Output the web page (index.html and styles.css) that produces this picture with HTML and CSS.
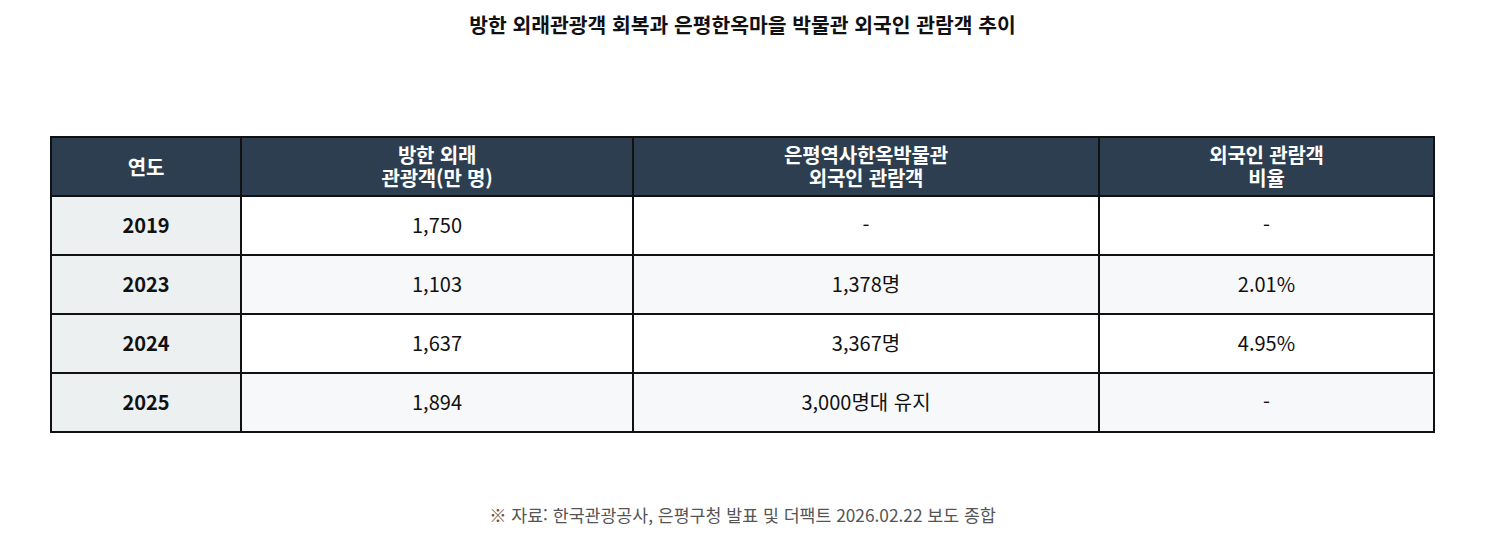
FILE: index.html
```html
<!DOCTYPE html>
<html lang="ko">
<head>
<meta charset="utf-8">
<link rel="stylesheet" href="styles.css">
</head>
<body>
<div class="page">
  <h1 class="title">방한 외래관광객 회복과 은평한옥마을 박물관 외국인 관람객 추이</h1>
  <table class="data">
    <colgroup>
      <col class="c1"><col class="c2"><col class="c3"><col class="c4">
    </colgroup>
    <thead>
      <tr>
        <th>연도</th>
        <th>방한 외래<br>관광객(만 명)</th>
        <th>은평역사한옥박물관<br>외국인 관람객</th>
        <th>외국인 관람객<br>비율</th>
      </tr>
    </thead>
    <tbody>
      <tr><td class="year">2019</td><td>1,750</td><td>-</td><td>-</td></tr>
      <tr class="alt"><td class="year">2023</td><td>1,103</td><td>1,378명</td><td>2.01%</td></tr>
      <tr><td class="year">2024</td><td>1,637</td><td>3,367명</td><td>4.95%</td></tr>
      <tr class="alt"><td class="year">2025</td><td>1,894</td><td>3,000명대 유지</td><td>-</td></tr>
    </tbody>
  </table>
  <p class="source">※ 자료: 한국관광공사, 은평구청 발표 및 더팩트 2026.02.22 보도 종합</p>
</div>
</body>
</html>
```

FILE: styles.css
```css
html, body {
  margin: 0;
  padding: 0;
  background: #ffffff;
}
.page {
  padding: 10px 50px 0 50px;
  font-family: "Noto Sans CJK KR", "Noto Sans", sans-serif;
  color: #111;
}
.title {
  margin: 0;
  text-align: center;
  font-size: 20.4px;
  font-weight: 700;
  line-height: 28px;
  color: #111;
}
.data {
  width: 100%;
  margin-top: 98px;
  border-collapse: collapse;
  border: 2px solid #111;
  table-layout: fixed;
}
.c1 { width: 190px; }
.c2 { width: 392px; }
.c3 { width: 466px; }
.c4 { width: auto; }
.data th, .data td {
  border: 2px solid #111;
  text-align: center;
  vertical-align: middle;
  padding: 0;
}
.data th {
  background: #2c3e50;
  color: #ffffff;
  font-size: 20px;
  font-weight: 700;
  line-height: 23px;
  height: 56px;
  padding-bottom: 1px;
  letter-spacing: -0.2px;
}
.data td {
  font-size: 20px;
  font-weight: 400;
  height: 54px;
  padding-bottom: 3px;
  color: #111;
  background: #ffffff;
}
.data tr.alt td {
  background: #f7f8fa;
}
.data td.year, .data tr.alt td.year {
  background: #ecf0f1;
  font-weight: 700;
}
.source {
  margin: 70px 0 0 0;
  text-align: center;
  font-size: 17.3px;
  color: #555;
  line-height: 24px;
}
```
